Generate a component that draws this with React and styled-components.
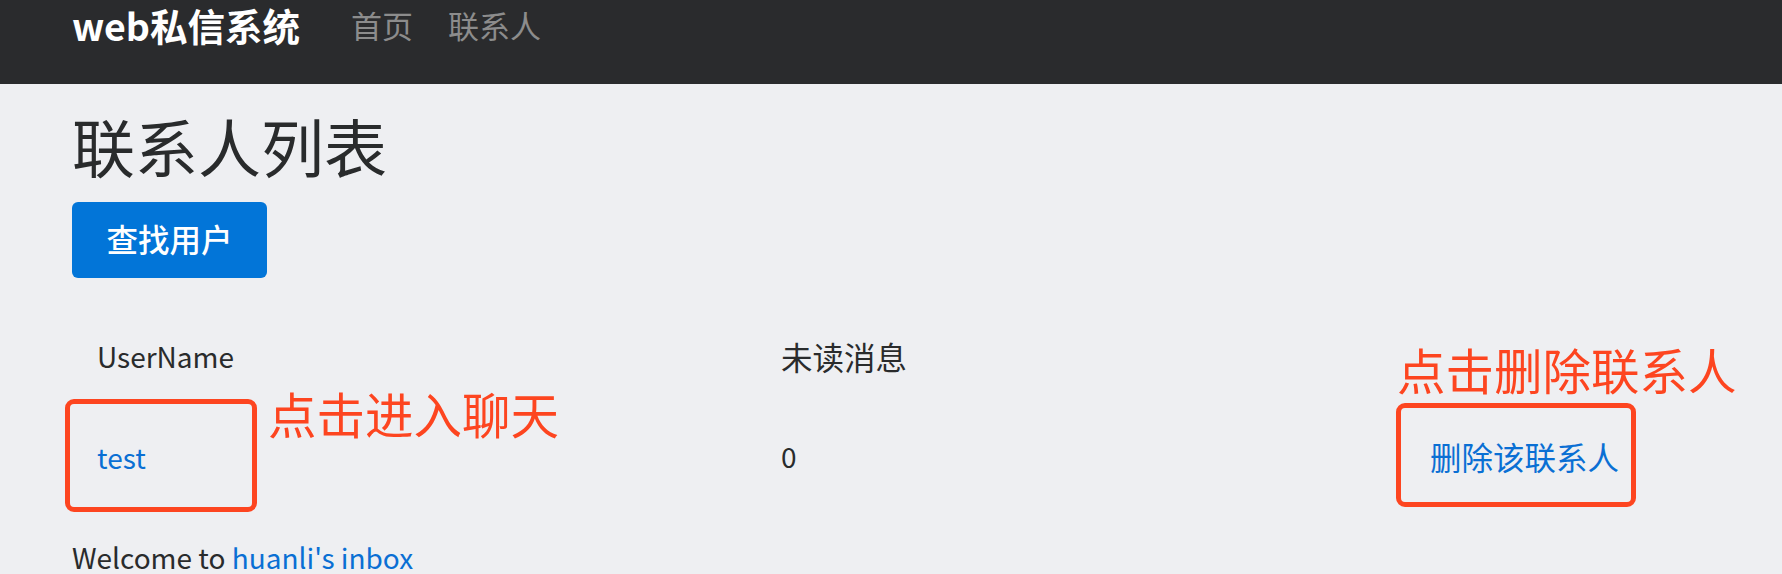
import styled, { createGlobalStyle } from 'styled-components';

//Colors
const colors = {
  navBg: '#2a2b2d',
  pageBg: '#eeeff2',
  text: '#292b2c',
  navLink: '#8c8c8c',
  primary: '#0275d8',
  link: '#0a6fd4',
  mark: '#fd4520',
};

const GlobalStyle = createGlobalStyle`
  html, body {
    margin: 0;
    padding: 0;
    background: ${colors.pageBg};
    font-family: "Noto Sans CJK SC", "Noto Sans", sans-serif;
    color: ${colors.text};
  }
`;

const Navbar = styled.nav`
  display: flex;
  align-items: flex-start;
  height: 84px;
  padding: 0 72px;
  background: ${colors.navBg};
`;

const Brand = styled.a`
  font-size: 37.5px;
  font-weight: 700;
  line-height: 50px;
  color: #fff;
  margin-right: 51px;
`;

const NavLinks = styled.div`
  display: flex;
  gap: 35px;
`;

const NavLink = styled.a`
  font-size: 31px;
  line-height: 50px;
  color: ${colors.navLink};
`;

const Main = styled.main`
  padding: 23px 72px 0;
`;

const Title = styled.h1`
  margin: 0;
  font-size: 63px;
  font-weight: 400;
  line-height: 76px;
`;

const Button = styled.button`
  display: flex;
  align-items: center;
  justify-content: center;
  margin-top: 19px;
  width: 195px;
  height: 76px;
  padding: 0 0 4px;
  border: none;
  border-radius: 6px;
  background: ${colors.primary};
  color: #fff;
  font-family: inherit;
  font-size: 31.5px;
  font-weight: 500;
`;

const Table = styled.div`
  display: grid;
  grid-template-columns: 684px 649px 1fr;
  grid-template-rows: 108px 92px;
  margin-top: 24px;
`;

const Cell = styled.div`
  position: relative;
  display: flex;
  align-items: center;
  padding-left: 25px;
  font-size: 31.5px;
  line-height: 45px;
`;

// latin text runs a little narrower than the CJK text
const Latin = styled.span`
  font-size: 28px;
`;

const Link = styled.a`
  color: ${colors.link};
  text-decoration: none;
`;

// Annotation overlays on the screenshot
const MarkBox = styled.div`
  position: absolute;
  left: ${p => p.$left}px;
  top: ${p => p.$top}px;
  width: ${p => p.$width}px;
  height: ${p => p.$height}px;
  box-sizing: border-box;
  border: 5px solid ${colors.mark};
  border-radius: 9px;
  pointer-events: none;
`;

const MarkText = styled.span`
  position: absolute;
  left: ${p => p.$left}px;
  top: ${p => p.$top}px;
  font-size: 48.5px;
  line-height: 58px;
  color: ${colors.mark};
  white-space: nowrap;
`;

const Footer = styled.p`
  margin: 33px 0 0;
  font-size: 28px;
  line-height: 45px;
`;

const App = () => {
  return (
    <>
      <GlobalStyle />
      <Navbar>
        <Brand>web私信系统</Brand>
        <NavLinks>
          <NavLink>首页</NavLink>
          <NavLink>联系人</NavLink>
        </NavLinks>
      </Navbar>
      <Main>
        <Title>联系人列表</Title>
        <Button>查找用户</Button>
        <Table>
          <Cell><Latin>UserName</Latin></Cell>
          <Cell>未读消息</Cell>
          <Cell />
          <Cell>
            <Link><Latin>test</Latin></Link>
            <MarkBox $left={-7} $top={-11} $width={192} $height={113} />
            <MarkText $left={196} $top={-26}>点击进入聊天</MarkText>
          </Cell>
          <Cell><Latin>0</Latin></Cell>
          <Cell>
            <Link>删除该联系人</Link>
            <MarkBox $left={-9} $top={-7} $width={240} $height={104} />
            <MarkText $left={-8} $top={-70}>点击删除联系人</MarkText>
          </Cell>
        </Table>
        <Footer>
          Welcome to <Link>huanli's inbox</Link>
        </Footer>
      </Main>
    </>
  );
};

export default App;
